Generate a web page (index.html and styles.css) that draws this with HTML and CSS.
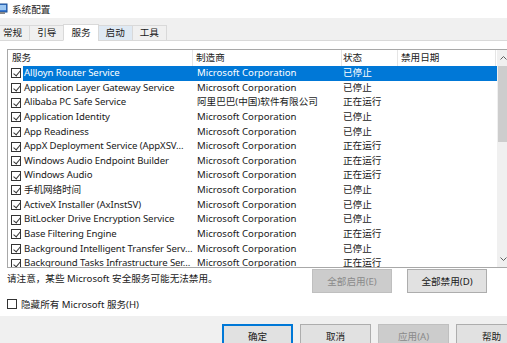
FILE: index.html
```html
<!DOCTYPE html>
<html lang="zh-CN">
<head>
  <meta charset="UTF-8" />
  <title>系统配置</title>
  <link rel="stylesheet" href="styles.css">
</head>
<body>
  <div class="titlebar">
    <svg class="app-icon" viewBox="0 0 8 12">
      <rect x="-4" y="1" width="11" height="8" fill="#3a7bd5" stroke="#1d4f91" stroke-width="1"/>
      <rect x="-3" y="2" width="9" height="5" fill="#9cc7f2"/>
      <rect x="-1" y="9" width="6" height="2" fill="#8a8a8a"/>
    </svg>
    <span>系统配置</span>
  </div>

  <div class="tabs">
    <div class="tab">常规</div>
    <div class="tab">引导</div>
    <div class="tab is-active">服务</div>
    <div class="tab is-hover">启动</div>
    <div class="tab">工具</div>
    <div class="tab-fill"></div>
  </div>

  <div class="page">
    <div class="list">
      <div class="list-main">
        <div class="list-head">
          <div class="hcell col-name">服务</div>
          <div class="hcell col-maker">制造商</div>
          <div class="hcell col-status">状态</div>
          <div class="hcell col-date">禁用日期</div>
        </div>
        <div class="rows">
          <div class="row is-selected"><span class="cb on"></span><div class="cells"><span class="c-name">AllJoyn Router Service</span><span class="c-maker">Microsoft Corporation</span><span class="c-status">已停止</span><span class="c-date"></span></div></div>
          <div class="row"><span class="cb on"></span><div class="cells"><span class="c-name">Application Layer Gateway Service</span><span class="c-maker">Microsoft Corporation</span><span class="c-status">已停止</span><span class="c-date"></span></div></div>
          <div class="row"><span class="cb on"></span><div class="cells"><span class="c-name">Alibaba PC Safe Service</span><span class="c-maker">阿里巴巴(中国)软件有限公司</span><span class="c-status">正在运行</span><span class="c-date"></span></div></div>
          <div class="row"><span class="cb on"></span><div class="cells"><span class="c-name">Application Identity</span><span class="c-maker">Microsoft Corporation</span><span class="c-status">已停止</span><span class="c-date"></span></div></div>
          <div class="row"><span class="cb on"></span><div class="cells"><span class="c-name">App Readiness</span><span class="c-maker">Microsoft Corporation</span><span class="c-status">已停止</span><span class="c-date"></span></div></div>
          <div class="row"><span class="cb on"></span><div class="cells"><span class="c-name">AppX Deployment Service (AppXSV...</span><span class="c-maker">Microsoft Corporation</span><span class="c-status">正在运行</span><span class="c-date"></span></div></div>
          <div class="row"><span class="cb on"></span><div class="cells"><span class="c-name">Windows Audio Endpoint Builder</span><span class="c-maker">Microsoft Corporation</span><span class="c-status">正在运行</span><span class="c-date"></span></div></div>
          <div class="row"><span class="cb on"></span><div class="cells"><span class="c-name">Windows Audio</span><span class="c-maker">Microsoft Corporation</span><span class="c-status">正在运行</span><span class="c-date"></span></div></div>
          <div class="row"><span class="cb on"></span><div class="cells"><span class="c-name">手机网络时间</span><span class="c-maker">Microsoft Corporation</span><span class="c-status">已停止</span><span class="c-date"></span></div></div>
          <div class="row"><span class="cb on"></span><div class="cells"><span class="c-name">ActiveX Installer (AxInstSV)</span><span class="c-maker">Microsoft Corporation</span><span class="c-status">已停止</span><span class="c-date"></span></div></div>
          <div class="row"><span class="cb on"></span><div class="cells"><span class="c-name">BitLocker Drive Encryption Service</span><span class="c-maker">Microsoft Corporation</span><span class="c-status">已停止</span><span class="c-date"></span></div></div>
          <div class="row"><span class="cb on"></span><div class="cells"><span class="c-name">Base Filtering Engine</span><span class="c-maker">Microsoft Corporation</span><span class="c-status">正在运行</span><span class="c-date"></span></div></div>
          <div class="row"><span class="cb on"></span><div class="cells"><span class="c-name">Background Intelligent Transfer Serv...</span><span class="c-maker">Microsoft Corporation</span><span class="c-status">已停止</span><span class="c-date"></span></div></div>
          <div class="row"><span class="cb on"></span><div class="cells"><span class="c-name">Background Tasks Infrastructure Ser...</span><span class="c-maker">Microsoft Corporation</span><span class="c-status">正在运行</span><span class="c-date"></span></div></div>
        </div>
      </div>
      <div class="scrollbar">
        <svg class="arrow" viewBox="0 0 7 4"><polyline points="0.5,3.5 3.5,0.5 6.5,3.5" fill="none" stroke="#606060" stroke-width="1"/></svg>
        <div class="thumb"></div>
        <div class="track"></div>
        <svg class="arrow" viewBox="0 0 7 4"><polyline points="0.5,0.5 3.5,3.5 6.5,0.5" fill="none" stroke="#606060" stroke-width="1"/></svg>
      </div>
    </div>

    <div class="note-row">
      <span class="note">请注意，某些 Microsoft 安全服务可能无法禁用。</span>
      <div class="note-btns">
        <button class="btn is-disabled">全部启用(E)</button>
        <button class="btn">全部禁用(D)</button>
      </div>
    </div>

    <label class="hide-ms"><span class="cb"></span>隐藏所有 Microsoft 服务(H)</label>
  </div>

  <div class="footer">
    <button class="btn btn-foot is-default">确定</button>
    <button class="btn btn-foot">取消</button>
    <button class="btn btn-foot is-disabled">应用(A)</button>
    <button class="btn btn-foot">帮助</button>
  </div>
</body>
</html>
```

FILE: styles.css
```css
* {
  margin: 0; padding: 0; box-sizing: border-box;
}
body {
  font-family: "Noto Sans", "Noto Sans CJK SC", sans-serif;
  font-size: 9.6px;
  color: #1a1a1a;
  background: #f0f0f0;
  width: 507px;
  height: 343px;
  overflow: hidden;
}

/* title bar */
.titlebar {
  height: 18px;
  background: #fff;
  display: flex;
  align-items: center;
  gap: 4px;
}
.app-icon {
  width: 8px;
  height: 12px;
}

/* tabs */
.tabs {
  display: flex;
  align-items: flex-end;
  height: 23px;
  margin-left: -5px;
}
.tab {
  height: 16px;
  line-height: 14px;
  padding: 0 7px;
  border: 1px solid #d9d9d9;
  margin-right: -1px;
  background: #f0f0f0;
}
.tab.is-hover { background: #dfe9f3; }
.tab.is-active {
  height: 17px;
  line-height: 15px;
  background: #fff;
  border-bottom-color: #fff;
}
.tab-fill {
  flex: 1;
  border-bottom: 1px solid #d9d9d9;
}

/* tab page */
.page {
  background: #fff;
  height: 275px;
  padding: 8px 0 0 7px;
}
.list {
  display: flex;
  width: 514px;
  height: 219px;
  border: 1px solid #a8a8a8;
  overflow: hidden;
}
.list-main {
  width: 489px;
  flex-shrink: 0;
}
.list-head {
  display: flex;
  height: 16px;
  line-height: 16px;
}
.hcell {
  border-right: 1px solid #e5e5e5;
  white-space: nowrap;
}
.hcell.col-name { width: 185px; padding-left: 4px; }
.hcell.col-maker { width: 149px; padding-left: 3px; }
.hcell.col-status { width: 56px; padding-left: 1px; }
.hcell.col-date { width: 98px; padding-left: 3px; }

.row {
  display: flex;
  align-items: center;
  height: 14.65px;
}
.cells {
  display: flex;
  flex: 1;
  height: 100%;
  line-height: 14.65px;
  white-space: nowrap;
}
.row.is-selected .cells {
  background: #0078d7;
  color: #fff;
}
.c-name { width: 170px; padding-left: 1px; overflow: hidden; letter-spacing: -0.1px; }
.c-maker { width: 149px; padding-left: 4px; overflow: hidden; }
.c-status { width: 56px; padding-left: 1px; }
.c-date { flex: 1; }

/* checkbox */
.cb {
  position: relative;
  flex-shrink: 0;
  width: 10px;
  height: 10px;
  margin: 0 2px 0 3px;
  border: 1px solid #333;
  background: #fff;
}
.cb.on::after {
  content: "";
  position: absolute;
  left: 2.5px;
  top: 0px;
  width: 3px;
  height: 6px;
  border: solid #333;
  border-width: 0 1px 1px 0;
  transform: rotate(40deg);
}

/* scrollbar */
.scrollbar {
  width: 17px;
  background: #f0f0f0;
  display: flex;
  flex-direction: column;
  padding: 0 0 0 1px;
}
.arrow {
  width: 7px;
  height: 4px;
  margin: 6px 0 6px 2px;
}
.thumb {
  height: 76px;
  background: #cdcdcd;
  margin-right: 7px;
}
.track { flex: 1; }

/* note row */
.note-row {
  display: flex;
  justify-content: space-between;
  align-items: flex-start;
  margin-top: 1px;
  padding-right: 20px;
}
.note {
  margin-top: 3px;
  line-height: 14px;
}
.note-btns {
  display: flex;
  gap: 15px;
}
.btn {
  font-family: inherit;
  font-size: 9.6px;
  color: #1a1a1a;
  width: 80px;
  height: 24px;
  background: #e1e1e1;
  border: 1px solid #adadad;
}
.btn.is-disabled {
  background: #cccccc;
  border-color: #bfbfbf;
  color: #8a8a8a;
}
.hide-ms {
  display: flex;
  align-items: center;
  gap: 2px;
  margin-top: 6px;
  height: 10px;
}
.hide-ms .cb { margin: 0 2px 0 0; }

/* dialog buttons */
.footer {
  display: flex;
  gap: 7px;
  padding: 8px 0 0 222px;
  width: 560px;
}
.btn-foot {
  flex-shrink: 0;
  width: 71px;
  height: 23px;
}
.btn.is-default {
  border-color: #0078d7;
  box-shadow: inset 0 0 0 1px #0078d7;
}
```
